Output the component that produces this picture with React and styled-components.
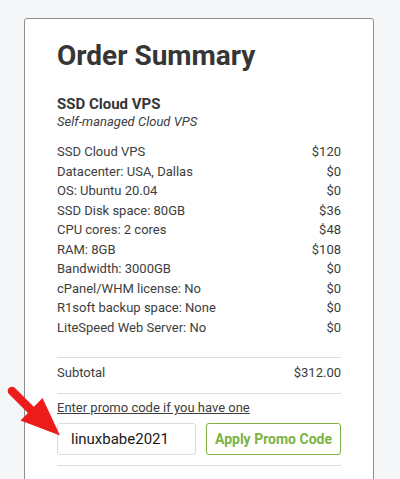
import React from "react";
import styled, { createGlobalStyle } from "styled-components";

const items = [
  ["SSD Cloud VPS", "$120"],
  ["Datacenter: USA, Dallas", "$0"],
  ["OS: Ubuntu 20.04", "$0"],
  ["SSD Disk space: 80GB", "$36"],
  ["CPU cores: 2 cores", "$48"],
  ["RAM: 8GB", "$108"],
  ["Bandwidth: 3000GB", "$0"],
  ["cPanel/WHM license: No", "$0"],
  ["R1soft backup space: None", "$0"],
  ["LiteSpeed Web Server: No", "$0"],
];

const App = () => {
  return (
    <>
      <GlobalStyle />
      <Page>
        <Card>
          <Title>Order Summary</Title>
          <ProductName>SSD Cloud VPS</ProductName>
          <ProductNote>Self-managed Cloud VPS</ProductNote>
          <ItemList>
            {items.map(([label, price]) => (
              <Row key={label}>
                <span>{label}</span>
                <span>{price}</span>
              </Row>
            ))}
          </ItemList>
          <Divider $gap={20} />
          <Subtotal>
            <span>Subtotal</span>
            <span>$312.00</span>
          </Subtotal>
          <Divider $gap={11} />
          <PromoLink href="#">Enter promo code if you have one</PromoLink>
          <PromoForm>
            <PromoInput defaultValue="linuxbabe2021" />
            <ApplyButton type="button">Apply Promo Code</ApplyButton>
          </PromoForm>
          <Divider $gap={10} />
        </Card>
        <Arrow viewBox="0 0 70 65" width="70" height="65">
          <line
            x1="12"
            y1="11"
            x2="38"
            y2="37"
            stroke="#ec1c1c"
            strokeWidth="8.5"
            strokeLinecap="round"
          />
          <polygon points="20.5,40.5 42.5,18 60,55.5" fill="#ec1c1c" />
        </Arrow>
      </Page>
    </>
  );
};

export default App;

const GlobalStyle = createGlobalStyle`
  body {
    margin: 0;
    background: #f5f6f8;
    font-family: Roboto, "Liberation Sans", sans-serif;
    color: #3d3d3d;
  }
`;

const Page = styled.div`
  position: relative;
  height: 479px;
  overflow: hidden;
  padding: 18px 0 0 24px;
  box-sizing: border-box;
`;

const Card = styled.div`
  width: 350px;
  box-sizing: border-box;
  background: #fff;
  border: 1px solid #8f8f8f;
  border-radius: 3px;
  padding: 20px 32px 40px 32px;
`;

const Title = styled.h1`
  margin: 0;
  font-size: 28px;
  line-height: 34px;
  font-weight: 700;
  color: #363636;
`;

const ProductName = styled.div`
  margin-top: 22px;
  font-size: 15px;
  line-height: 18px;
  font-weight: 700;
  color: #363636;
`;

const ProductNote = styled.div`
  font-size: 13px;
  line-height: 18px;
  font-style: italic;
  color: #3d3d3d;
`;

const ItemList = styled.div`
  margin-top: 11px;
  display: flex;
  flex-direction: column;
`;

const Row = styled.div`
  display: flex;
  justify-content: space-between;
  font-size: 13px;
  line-height: 19.5px;
`;

const Divider = styled.hr`
  margin: ${(p) => p.$gap}px 0 0;
  border: none;
  border-top: 1px solid #dddddd;
`;

const Subtotal = styled(Row)`
  padding-top: 4.5px;
`;

const PromoLink = styled.a`
  display: block;
  margin-top: 5px;
  font-size: 13px;
  line-height: 18px;
  color: #3d3d3d;
  text-decoration: underline;
`;

const PromoForm = styled.div`
  display: flex;
  gap: 10px;
  margin-top: 6px;
`;

const PromoInput = styled.input`
  width: 139px;
  height: 32px;
  box-sizing: border-box;
  border: 1px solid #dcdcdc;
  border-radius: 3px;
  padding: 0 13px;
  font-family: Roboto, "Liberation Sans", sans-serif;
  font-size: 15px;
  color: #1a1a1a;
  outline: none;
`;

const ApplyButton = styled.button`
  flex: 1;
  height: 32px;
  box-sizing: border-box;
  background: #fff;
  border: 1px solid #7cb342;
  border-radius: 3px;
  color: #7cb342;
  font-family: Roboto, "Liberation Sans", sans-serif;
  font-size: 14px;
  font-weight: 700;
  cursor: pointer;
`;

const Arrow = styled.svg`
  position: absolute;
  left: 0;
  top: 380px;
`;
